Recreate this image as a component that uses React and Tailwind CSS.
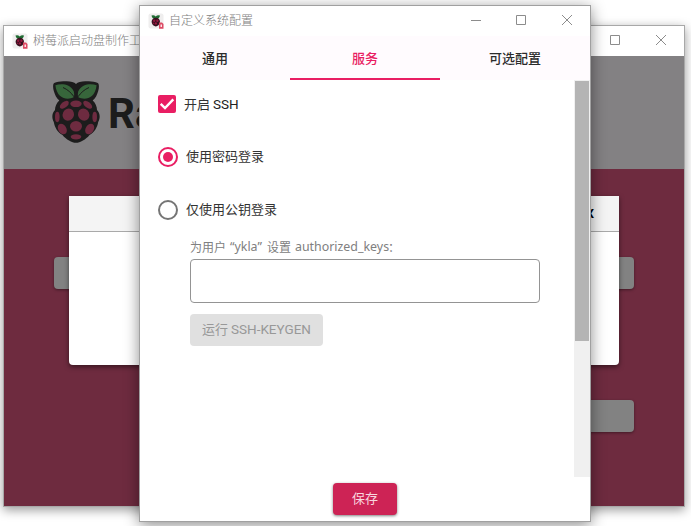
import React from "react";

function Raspberry({ className, berry = "#6e2b40", leaf = "#37663b", line = "#1c1c1c" }) {
  return (
    <svg viewBox="0 0 48 62" className={className}>
      <path
        fill={line}
        d="M13 .3C9 0 5 .8 2.200 2 .8 2.800.8 7 1.800 10c1 3.500 2.500 7 5.500 9.500C4.500 22 3 25.500 3 29-.2 32-.4 37 1.800 41c.8 5.500 4 10.500 8.700 13C14 58.500 20 61.800 24 61.800S34 58.500 37.500 54c4.700-2.500 7.900-7.500 8.700-13C48.400 37 48.200 32 45 29c0-3.500-1.500-7-4.300-9.500 3-2.500 4.500-6 5.500-9.500 1-3 1-7.200-.4-8C43 .8 39 0 35 .3 30 0 26 1 24 3 22 1 18 0 13 .3Z"
      />
      <path fill={leaf} d="M3.400 4.200C9 2.500 18 2.500 21.800 10.500c.5 2 .4 3.800.2 5.500C16 19.500 5 18.500 3.400 4.200Z" />
      <path fill={leaf} d="M44.600 4.200C39 2.500 30 2.500 26.200 10.500c-.5 2-.4 3.800-.2 5.500C32 19.500 43 18.500 44.600 4.200Z" />
      <path stroke={line} strokeWidth="1" fill="none" d="M11 6.500c4.500 2 8 5 11.500 9.800M37 6.500c-4.500 2-8 5-11.500 9.800" />
      <g fill={berry}>
        <ellipse cx="24" cy="22.800" rx="5.700" ry="3.300" />
        <ellipse cx="12.300" cy="23.800" rx="5.200" ry="2.900" transform="rotate(-38 12.300 23.800)" />
        <ellipse cx="35.700" cy="23.800" rx="5.200" ry="2.900" transform="rotate(38 35.700 23.800)" />
        <ellipse cx="16.300" cy="33.700" rx="5.600" ry="6.200" transform="rotate(25 16.300 33.700)" />
        <ellipse cx="31.700" cy="33.700" rx="5.600" ry="6.200" transform="rotate(-25 31.700 33.700)" />
        <ellipse cx="5.300" cy="36" rx="2.300" ry="5.200" />
        <ellipse cx="42.700" cy="36" rx="2.300" ry="5.200" />
        <ellipse cx="24" cy="45.200" rx="6" ry="5.300" />
        <ellipse cx="10.300" cy="48" rx="4" ry="5.700" transform="rotate(33 10.300 48) rotate(-66 10.300 48)" />
        <ellipse cx="37.700" cy="48" rx="4" ry="5.700" transform="rotate(33 37.700 48)" />
        <ellipse cx="24" cy="55.800" rx="5.300" ry="2.600" />
      </g>
    </svg>
  );
}

function AppIcon() {
  return (
    <svg viewBox="0 0 16 16" className="size-4 shrink-0">
      <rect x="0.500" y="0.500" width="15" height="15" rx="2" fill="#efeeee" />
      <path d="M3.500 2.500Q6 1.500 7.700 3.500 9.500 1.500 12 2.500 11.500 6 7.800 6 4 6 3.500 2.500Z" fill="#1f6b33" />
      <path d="M7.800 4.700C10.500 4.700 12 6.500 12 9 11.800 11.500 9.500 13.400 7.800 13.400S3.800 11.500 3.600 9C3.600 6.500 5.200 4.700 7.800 4.700Z" fill="#38101f" />
      <g fill="#96183f">
        <circle cx="6.200" cy="7.800" r="1.200" />
        <circle cx="9.400" cy="7.800" r="1.200" />
        <circle cx="7.800" cy="10.400" r="1.200" />
        <circle cx="5.300" cy="10.300" r=".7" />
      </g>
      <path d="M11 9.500h3l1.500 1.500v4.700H11Z" fill="#dc4a64" />
      <path d="M12.500 11.500h1.500v2.500h-1.500Z" fill="#fbe4e8" />
    </svg>
  );
}

function TitleBar({ title }) {
  return (
    <div className="flex h-[30px] shrink-0 items-center bg-white pl-2 text-[12px] leading-4 text-[#808080]">
      <AppIcon />
      <span className="ml-[5px] whitespace-nowrap pb-0.5 font-light">{title}</span>
      <div className="ml-auto flex h-full pb-0.5">
        <span className="flex w-11 items-center justify-center">
          <svg viewBox="0 0 10 10" className="size-2.5" stroke="#8c8c8c" fill="none"><path d="M0 5.500h10" /></svg>
        </span>
        <span className="flex w-[46px] items-center justify-center">
          <svg viewBox="0 0 10 10" className="size-2.5" stroke="#8c8c8c" fill="none"><path d="M.5.5h9v9h-9z" /></svg>
        </span>
        <span className="flex w-[46px] items-center justify-center">
          <svg viewBox="0 0 10 10" className="size-2.5" stroke="#8c8c8c" fill="none"><path d="M0 0l10 10M10 0L0 10" /></svg>
        </span>
      </div>
    </div>
  );
}

function MainWindow() {
  return (
    <div className="absolute left-[3px] top-[25px] flex h-[482px] w-[682px] flex-col border border-[#a8a8a8] bg-white shadow-[0_3px_10px_rgba(0,0,0,0.4)]">
      <TitleBar title="树莓派启动盘制作工具" />
      <div className="relative flex min-h-0 flex-1 flex-col bg-[#6e2b3f]">
        <div className="flex h-[113px] shrink-0 items-start bg-[#838183] pl-12 pt-[25px]">
          <Raspberry className="h-[62px] w-12" />
          <span className="ml-2 mt-2 whitespace-nowrap font-[Roboto] text-[42px] font-bold leading-[50px] text-[#1c1c1c]">
            Raspberry Pi
          </span>
        </div>
        <div className="flex flex-col items-end pl-[50px] pr-[50px] pt-[88px]">
          <div className="h-8 w-full rounded bg-[#828282] shadow-[0_1px_3px_rgba(0,0,0,0.4)]" />
          <div className="mt-[111px] h-8 w-[150px] rounded bg-[#828282] shadow-[0_1px_3px_rgba(0,0,0,0.4)]" />
        </div>
        <div className="absolute left-[65px] top-[140px] flex h-[169px] w-[550px] flex-col rounded-b bg-white shadow-[0_2px_5px_rgba(0,0,0,0.5)]">
          <div className="flex h-9 items-center justify-end border-b border-[#a9a9a9] bg-[#f4f4f4] pr-[25px] font-[Roboto] text-[13px] font-bold text-black">
            X
          </div>
        </div>
      </div>
    </div>
  );
}

function Tab({ children, active }) {
  return (
    <div
      className={
        active
          ? "flex flex-1 items-center justify-center border-b-2 border-[#e91e63] pt-0.5 text-[#e91e63]"
          : "flex flex-1 items-center justify-center border-b-2 border-transparent pt-0.5 text-[#2b2b2b]"
      }
    >
      {children}
    </div>
  );
}

function Radio({ checked, children }) {
  return (
    <div className="flex h-5 items-center gap-2">
      <svg viewBox="0 0 20 20" className="size-5" fill="none">
        <circle cx="10" cy="10" r="9" strokeWidth="2" stroke={checked ? "#e91e63" : "#757575"} />
        {checked && <circle cx="10" cy="10" r="5" fill="#e91e63" />}
      </svg>
      <span className="pb-0.5">{children}</span>
    </div>
  );
}

function SettingsWindow() {
  return (
    <div className="absolute left-[139px] top-[5px] flex h-[517px] w-[452px] flex-col border border-[#a0a0a0] bg-white shadow-[0_3px_14px_rgba(0,0,0,0.45)]">
      <TitleBar title="自定义系统配置" />
      <div className="flex h-11 shrink-0 bg-[#fffbfe] text-[13px] font-medium">
        <Tab>通用</Tab>
        <Tab active>服务</Tab>
        <Tab>可选配置</Tab>
      </div>
      <div className="flex h-[397px] shrink-0 text-[13px] leading-5 text-[#333333]">
        <div className="flex-1 pl-[18px] pt-[15px]">
          <div className="flex h-[18px] items-center gap-2">
            <svg viewBox="0 0 18 18" className="size-[18px]">
              <rect width="18" height="18" rx="2" fill="#e91e63" />
              <path d="M2.700 8.800L7 13l8.300-8.600" stroke="white" strokeWidth="2.400" fill="none" />
            </svg>
            <div className="flex whitespace-pre">
              <span>开启 </span>
              <span className="font-[Roboto] text-[13.500px] text-[#222222]">SSH</span>
            </div>
          </div>
          <div className="mt-[34px] flex flex-col gap-[33px]">
            <Radio checked>使用密码登录</Radio>
            <Radio>仅使用公钥登录</Radio>
          </div>
          <div className="ml-8 mt-[17px] flex flex-col items-start">
            <div className="flex h-[22px] items-center whitespace-pre pb-[3px] text-[12px] text-[#808080]">
              <span className="w-10">为用户 </span>
              <span className="w-[37px] font-['Noto_Sans'] text-[12.400px]">“ykla” </span>
              <span className="w-7">设置 </span>
              <span className="font-['Noto_Sans'] text-[12.400px]">authorized_keys</span>
              <span className="-ml-px">：</span>
            </div>
            <div className="h-11 w-[350px] rounded border border-[#949494]" />
            <div className="mt-[11px] flex h-8 w-[133px] items-center justify-center whitespace-pre rounded bg-[#e0e0e0] pb-0.5 text-[#989898]">
              <span>运行 </span>
              <span className="font-[Roboto] text-[13.500px]">SSH-KEYGEN</span>
            </div>
          </div>
        </div>
        <div className="w-4 bg-[#f0f0f0] px-px pt-px">
          <div className="h-[260px] bg-[#b4b4b4]" />
        </div>
      </div>
      <div className="flex flex-1 items-start justify-center pt-1.5">
        <div className="flex h-8 w-16 items-center justify-center rounded bg-[#cd2355] pb-0.5 text-[13px] text-[#f8d5df] shadow-[0_1px_3px_rgba(0,0,0,0.5)]">
          保存
        </div>
      </div>
    </div>
  );
}

export default function App() {
  return (
    <div className="relative h-[526px] w-[691px] overflow-hidden bg-white font-['Noto_Sans_CJK_SC',sans-serif]">
      <MainWindow />
      <SettingsWindow />
    </div>
  );
}
